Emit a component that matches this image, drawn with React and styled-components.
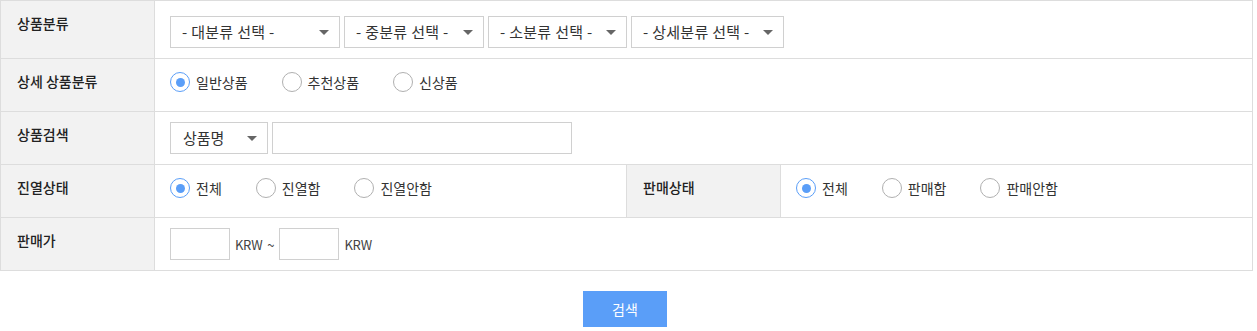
import React from "react";
import styled, { createGlobalStyle } from "styled-components";

const Global = createGlobalStyle`
  html, body { margin: 0; padding: 0; background: #fff; }
  body { font-family: "Noto Sans CJK KR", "Noto Sans", sans-serif; color: #333; }
  * { box-sizing: border-box; }
`;

const Page = styled.div`
  width: 1253px;
`;

const Table = styled.div`
  display: grid;
  grid-template-columns: 154px 1fr 154px 1fr;
  border-top: 1px solid #ddd;
  border-left: 1px solid #ddd;
`;

const Th = styled.div`
  background: #f2f2f2;
  border-right: 1px solid #ddd;
  border-bottom: 1px solid #ddd;
  padding: 10px 16px;
  font-size: 14px;
  line-height: 24px;
  font-weight: 500;
  color: #222;
`;

const Td = styled.div`
  grid-column: span ${(p) => p.$span || 1};
  border-right: 1px solid #ddd;
  border-bottom: 1px solid #ddd;
  padding: ${(p) => p.$top || 10}px 15px 10px;
  min-height: 53px;
  display: flex;
  align-items: flex-start;
  gap: 4px;
`;

const SelectBox = styled.div`
  position: relative;
  width: ${(p) => p.$w}px;
  height: 32px;
  border: 1px solid #d0d0d0;
  background: #fff;
  padding-left: ${(p) => p.$pl || 11}px;
  font-size: 15px;
  letter-spacing: ${(p) => p.$ls ?? 0.3}px;
  line-height: 30px;
  color: #333;
  white-space: nowrap;
`;

const Arrow = styled.span`
  position: absolute;
  right: 10px;
  top: 13px;
  width: 0;
  height: 0;
  border-left: 5px solid transparent;
  border-right: 5px solid transparent;
  border-top: 5px solid #666;
`;

const TextInput = styled.div`
  width: ${(p) => p.$w}px;
  height: 32px;
  border: 1px solid #d0d0d0;
  background: #fff;
`;

const RadioGroup = styled.div`
  display: flex;
  align-items: center;
  height: 26px;
`;

const RadioItem = styled.label`
  display: inline-flex;
  align-items: center;
  margin-right: ${(p) => p.$mr ?? 34}px;
  font-size: 14px;
  color: #333;
  line-height: 26px;
`;

const Circle = styled.span`
  width: 20px;
  height: 20px;
  border-radius: 50%;
  border: 1px solid ${(p) => (p.$on ? "#5a9ef8" : "#b0b0b0")};
  display: inline-flex;
  align-items: center;
  justify-content: center;
  margin-right: 6px;
  background: #fff;
  &::after {
    content: "";
    width: 9px;
    height: 9px;
    border-radius: 50%;
    background: ${(p) => (p.$on ? "#5a9ef8" : "transparent")};
  }
`;

const PriceRow = styled.div`
  display: flex;
  align-items: center;
  gap: 5px;
  font-size: 13px;
  color: #444;
`;

const Unit = styled.span`
  font-size: 13px;
  letter-spacing: -0.3px;
  color: #444;
`;

const Footer = styled.div`
  display: flex;
  justify-content: center;
  padding-top: 20px;
  padding-right: 3px;
`;

const Button = styled.button`
  width: 84px;
  height: 36px;
  border: 0;
  background: #5a9ef8;
  color: #fff;
  font-family: inherit;
  font-size: 14px;
  cursor: pointer;
  padding: 0;
`;

function Select({ w, children, ls, pl }) {
  return (
    <SelectBox $w={w} $ls={ls} $pl={pl}>
      {children}
      <Arrow />
    </SelectBox>
  );
}

function Radios({ items, first = 0 }) {
  return (
    <RadioGroup>
      {items.map((t, i) => (
        <RadioItem key={t}>
          <Circle $on={i === first} />
          {t}
        </RadioItem>
      ))}
    </RadioGroup>
  );
}

export default function App() {
  return (
    <Page>
      <Global />
      <Table>
        <Th>상품분류</Th>
        <Td $span={3} $top={15}>
          <Select w={170}>- 대분류 선택 -</Select>
          <Select w={140}>- 중분류 선택 -</Select>
          <Select w={139}>- 소분류 선택 -</Select>
          <Select w={153}>- 상세분류 선택 -</Select>
        </Td>

        <Th>상세 상품분류</Th>
        <Td $span={3}>
          <Radios items={["일반상품", "추천상품", "신상품"]} />
        </Td>

        <Th>상품검색</Th>
        <Td $span={3}>
          <Select w={98} ls={0} pl={12}>상품명</Select>
          <TextInput $w={300} />
        </Td>

        <Th>진열상태</Th>
        <Td>
          <Radios items={["전체", "진열함", "진열안함"]} />
        </Td>
        <Th>판매상태</Th>
        <Td>
          <Radios items={["전체", "판매함", "판매안함"]} />
        </Td>

        <Th>판매가</Th>
        <Td $span={3}>
          <PriceRow>
            <TextInput $w={60} />
            <Unit>KRW</Unit>
            <span>~</span>
            <TextInput $w={60} />
            <Unit>KRW</Unit>
          </PriceRow>
        </Td>
      </Table>
      <Footer>
        <Button>검색</Button>
      </Footer>
    </Page>
  );
}
